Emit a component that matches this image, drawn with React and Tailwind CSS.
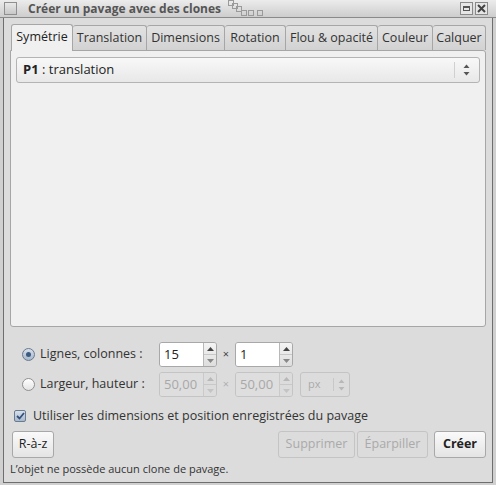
const font = { fontFamily: '"Open Sans", "DejaVu Sans", sans-serif' };

function Arrows({ disabled }) {
  const c = disabled ? "#b8b8b8" : "#555";
  return (
    <svg width="7" height="14" viewBox="0 0 7 14">
      <path d="M0.5 5 L3.5 1.5 L6.5 5 Z" fill={c} />
      <path d="M0.5 9 L3.5 12.5 L6.5 9 Z" fill={c} />
    </svg>
  );
}

function Spin({ value, disabled }) {
  return (
    <div className={`flex h-[25px] w-[58px] rounded-[3px] border ${disabled ? "border-[#c4c4c4]" : "border-[#a8a8a8]"} overflow-hidden`}>
      <div className={`flex-1 flex items-center pl-[4px] text-[13px] ${disabled ? "bg-[#dedede] text-[#a8a8a8]" : "bg-white text-[#222]"}`}>
        {value}
      </div>
      <div className={`w-[13px] flex flex-col border-l ${disabled ? "border-[#cacaca] bg-[#dcdcdc]" : "border-[#b8b8b8] bg-gradient-to-b from-[#f4f4f4] to-[#dedede]"}`}>
        <div className="flex-1 flex items-center justify-center border-b border-[#c8c8c8]">
          <svg width="7" height="4" viewBox="0 0 7 4"><path d="M0 4 L3.5 0 L7 4 Z" fill={disabled ? "#b8b8b8" : "#444"} /></svg>
        </div>
        <div className="flex-1 flex items-center justify-center">
          <svg width="7" height="4" viewBox="0 0 7 4"><path d="M0 0 L3.5 4 L7 0 Z" fill={disabled ? "#c4c4c4" : "#888"} /></svg>
        </div>
      </div>
    </div>
  );
}

const tabs = [
  ["Translation", "w-[74px]"],
  ["Dimensions", "w-[78px]"],
  ["Rotation", "w-[61px]"],
  ["Flou & opacité", "w-[92px]"],
  ["Couleur", "w-[55px]"],
  ["Calquer", "w-[53px]"],
];

export default function App() {
  return (
    <div className="w-[496px] h-[485px] flex flex-col bg-[#d0d0d0] text-[#333]" style={font}>
      {/* title bar */}
      <div className="h-[18px] flex items-center bg-gradient-to-b from-[#ececec] to-[#cdcdcd] border-b border-[#8a8a8a]">
        <div className="ml-[4px] w-[13px] h-[13px] border border-[#8f8f8f] bg-gradient-to-b from-[#e8e8e8] to-[#c8c8c8]" />
        <div className="ml-[11px] text-[12px] font-bold text-[#555] leading-none whitespace-nowrap">Créer un pavage avec des clones</div>
        <svg className="ml-[6px]" width="40" height="18" viewBox="0 0 40 18">
          <g fill="none" stroke="#9a9a9a">
            <rect x="1.5" y="0.5" width="5" height="5" />
            <rect x="5.5" y="3.5" width="5" height="5" />
            <rect x="9.5" y="6.5" width="5" height="5" />
            <rect x="14.5" y="10.5" width="5" height="5" />
            <rect x="21.5" y="10.5" width="5" height="5" />
            <rect x="30.5" y="10.5" width="5" height="5" />
          </g>
        </svg>
        <div className="ml-auto mr-[8px] flex gap-[2px]">
          <div className="w-[13px] h-[13px] border border-[#8a8a8a] bg-[#e6e6e6] flex items-center justify-center">
            <div className="w-[7px] h-[5px] border border-[#555] border-t-[2px]" />
          </div>
          <div className="w-[13px] h-[13px] border border-[#8a8a8a] bg-[#e6e6e6] flex items-center justify-center">
            <svg width="9" height="9" viewBox="0 0 9 9"><path d="M1 1 L8 8 M8 1 L1 8" stroke="#444" strokeWidth="2" /></svg>
          </div>
        </div>
      </div>

      {/* window body */}
      <div className="flex-1 mx-[3px] mb-[2px] border-x border-b border-[#6e6e6e] bg-[#dcdcdc] flex flex-col px-[6px]">
        {/* notebook */}
        <div className="mt-[5px] flex items-end h-[27px] ml-[1px] text-[12.5px] whitespace-nowrap">
          <div className="w-[62px] h-[27px] flex items-center justify-center bg-[#f0f0f0] border border-b-0 border-[#a6a6a6] rounded-t-[3px] text-[#222] relative z-10 -mb-px pb-[1px]">
            Symétrie
          </div>
          {tabs.map(([t, w]) => (
            <div key={t} className={`${w} h-[25px] flex items-center justify-center bg-gradient-to-b from-[#e2e2e2] to-[#d2d2d2] border border-l-0 border-b-0 border-[#a6a6a6] rounded-t-[3px] text-[#333]`}>
              {t}
            </div>
          ))}
        </div>
        <div className="h-[277px] bg-[#f0f0f0] border border-[#a6a6a6] rounded-b-[3px] rounded-tr-[3px] px-[5px] pt-[6px]">
          <div className="h-[26px] flex items-center border border-[#b4b4b4] rounded-[3px] bg-gradient-to-b from-[#f8f8f8] to-[#e8e8e8] pl-[6px] pr-[9px] text-[13px] text-[#222]">
            <span className="font-bold">P1</span>
            <span>&nbsp;: translation</span>
            <div className="ml-auto flex items-center gap-[8px]">
              <div className="w-px h-[16px] bg-[#d0d0d0]" />
              <Arrows />
            </div>
          </div>
        </div>

        {/* rows */}
        <div className="mt-[15px] flex flex-col gap-[5px] pl-[12px] text-[12.5px]">
          <div className="flex items-center h-[25px]">
            <div className="w-[13px] h-[13px] rounded-full border border-[#6a7a90] bg-gradient-to-b from-[#d8e0ea] to-[#a8b8cc] flex items-center justify-center">
              <div className="w-[5px] h-[5px] rounded-full bg-[#3c5a80]" />
            </div>
            <span className="ml-[5px] w-[119px] text-[#333]">Lignes, colonnes :</span>
            <Spin value="15" />
            <span className="w-[18px] text-center text-[11px] text-[#444]">×</span>
            <Spin value="1" />
          </div>
          <div className="flex items-center h-[25px]">
            <div className="w-[13px] h-[13px] rounded-full border border-[#909090] bg-gradient-to-b from-[#ffffff] to-[#e4e4e4]" />
            <span className="ml-[5px] w-[119px] text-[#333]">Largeur, hauteur :</span>
            <Spin value="50,00" disabled />
            <span className="w-[18px] text-center text-[11px] text-[#b0b0b0]">×</span>
            <Spin value="50,00" disabled />
            <div className="ml-[7px] w-[50px] h-[25px] border border-[#c4c4c4] rounded-[3px] bg-[#dcdcdc] flex items-center pl-[7px] text-[11px] text-[#aaa]">
              px
              <div className="ml-auto flex items-center gap-[4px] pr-[4px]">
                <div className="w-px h-[13px] bg-[#c8c8c8]" />
                <Arrows disabled />
              </div>
            </div>
          </div>
        </div>

        <div className="mt-[11px] flex items-center h-[16px] pl-[4px] text-[12.5px]">
          <div className="w-[12px] h-[12px] border border-[#6a7a90] rounded-[2px] bg-gradient-to-b from-[#d8e0ea] to-[#a8b8cc] flex items-center justify-center">
            <svg width="9" height="8" viewBox="0 0 9 8"><path d="M1 4 L3.5 6.5 L8 1" fill="none" stroke="#34507a" strokeWidth="1.8" /></svg>
          </div>
          <span className="ml-[7px] text-[#333]">Utiliser les dimensions et position enregistrées du pavage</span>
        </div>

        <div className="mt-[7px] flex items-center h-[27px] text-[12.5px] whitespace-nowrap">
          <div className="ml-[2px] w-[42px] h-[27px] flex items-center justify-center border border-[#a8a8a8] rounded-[3px] bg-gradient-to-b from-[#fafafa] to-[#e4e4e4] text-[#222]">R-à-z</div>
          <div className="ml-auto w-[77px] h-[27px] flex items-center justify-center border border-[#c4c4c4] rounded-[3px] bg-[#dcdcdc] text-[#aaa]">Supprimer</div>
          <div className="ml-[2px] w-[71px] h-[27px] flex items-center justify-center border border-[#c4c4c4] rounded-[3px] bg-[#dcdcdc] text-[#aaa]">Éparpiller</div>
          <div className="ml-[6px] w-[52px] h-[27px] flex items-center justify-center border border-[#a8a8a8] rounded-[3px] bg-gradient-to-b from-[#fafafa] to-[#e4e4e4] text-[#222] font-bold">Créer</div>
        </div>

        <div className="mt-[3px] text-[11px] text-[#333]">L’objet ne possède aucun clone de pavage.</div>
      </div>
    </div>
  );
}
